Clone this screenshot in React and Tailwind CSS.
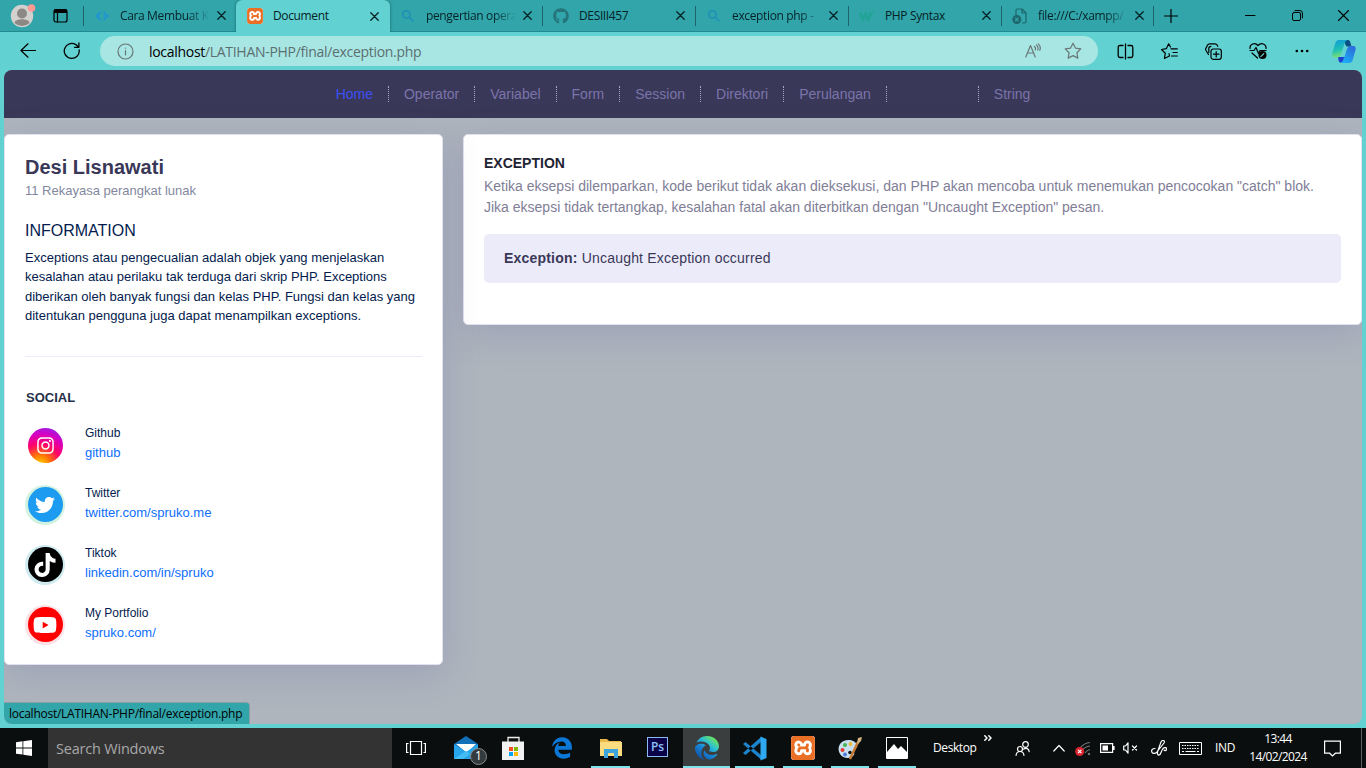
import { FaTwitter, FaTiktok, FaInstagram, FaYoutube, FaGithub } from "react-icons/fa";
import { FaEdge, FaEdgeLegacy } from "react-icons/fa6";
import { SiXampp } from "react-icons/si";

const line = { fill: "none", stroke: "currentColor", strokeWidth: 1.2, strokeLinecap: "round", strokeLinejoin: "round" };

function Svg({ w = 16, h, vb, className = "", children, ...rest }) {
  return (
    <svg width={w} height={h || w} viewBox={vb || `0 0 ${w} ${h || w}`} className={"shrink-0 " + className} {...rest}>
      {children}
    </svg>
  );
}

const Close = () => (
  <Svg w={9} {...line} strokeWidth={1.3} className="text-[#062124]">
    <path d="M.8.8l7.4 7.4M8.2.8L.8 8.2" />
  </Svg>
);

function Xampp({ size = 16 }) {
  return (
    <span className="flex shrink-0 overflow-hidden rounded-[3px] bg-white">
      <SiXampp size={size} color="#e96f26" />
    </span>
  );
}

const SearchFav = () => (
  <Svg w={16} fill="none" stroke="#2292b5" strokeWidth="1.800">
    <circle cx="6.500" cy="6.500" r="3.700" />
    <path d="M9.300 9.300l4 4" />
  </Svg>
);

const tabs = [
  { title: "Cara Membuat K", fade: true, icon: <Svg w={16}><path d="M6.500 3L1 8l5.500 5V9.700L4.700 8l1.800-1.700zM9.500 3L15 8l-5.500 5V9.700L11.300 8 9.500 6.300z" fill="#2196cf" /></Svg> },
  { title: "Document", active: true, icon: <Xampp /> },
  { title: "pengertian opera", fade: true, icon: <SearchFav /> },
  { title: "DESIII457", icon: <FaGithub size={16} color="#24747a" /> },
  { title: "exception php -", fade: true, icon: <SearchFav /> },
  { title: "PHP Syntax", icon: <Svg w={16}><path d="M.8 4.500l3 6.500 2.700-5 2.700 5 3-6.500" fill="none" stroke="#22a596" strokeWidth="2.800" /><path d="M12.800 3h2.200l-1 1.500c1.500 0 1.300 2-.3 2" fill="none" stroke="#22a596" strokeWidth=".8" /></Svg> },
  { title: "file:///C:/xampp/", fade: true, last: true, icon: <Svg w={16} {...line} className="text-[#1d686d]"><path d="M4 6.500V2.500Q4 1 5.500 1H10l4 4v8.500Q14 15 12.500 15H10.500M10 1v4h4" /><circle cx="4.800" cy="11.500" r="3.900" fill="currentColor" /><path d="M3.500 10.200l2.600 2.600M6.100 10.200l-2.600 2.600" stroke="#31a6aa" /></Svg> },
];

function TabStrip() {
  return (
    <div className="flex h-8 shrink-0 border-b border-[#238b8f] bg-[#31a5aa] text-[#052226]">
      <div className="flex w-[83px] items-center pl-[10px]">
        <Svg w={26}>
          <circle cx="12" cy="13" r="11.200" fill="#d3d1cf" />
          <circle cx="12" cy="10.500" r="5" fill="#8b8886" />
          <path d="M4.500 20c0-5 15-5 15 0a11 11 0 0 1-15 0z" fill="#8b8886" />
          <circle cx="21.500" cy="5" r="3.800" fill="#ff9a95" />
        </Svg>
        <Svg w={15} h={15} className="ml-[17px] text-black"><rect x="1" y="1.500" width="13" height="12.500" rx="2" {...line} /><path d="M1 1.500h13V5H1z" fill="currentColor" /><path d="M4.500 5v9" {...line} /></Svg>
      </div>
      {tabs.map((t, i) => (
        <div
          key={t.title}
          className={
            t.active
              ? "-mb-px -mr-px flex h-8 w-[154px] items-center rounded-t-[6px] bg-[#62d1d1] pl-[11px] shadow-[0_0_3px_rgba(0,60,60,.6)] [clip-path:inset(-3px_-3px_0_-3px)]"
              : "flex items-center " + (t.last ? "w-[152px]" : "w-[153px]")
          }
        >
          {!t.active && <span className={"mr-[10px] h-5 w-px " + (i === 2 ? "bg-transparent" : "bg-[#1b6468]")} />}
          {t.icon}
          <span
            className={
              "ml-[10px] h-5 w-[90px] shrink-0 overflow-hidden whitespace-nowrap text-[12px] leading-5 tracking-[-0.36px] " +
              (t.fade ? "[mask-image:linear-gradient(90deg,#000_75%,transparent)]" : "")
            }
          >
            {t.title}
          </span>
          <span className="ml-[7px]"><Close /></span>
        </div>
      ))}
      <div className="flex flex-1 items-center text-black">
        <span className="h-5 w-px bg-[#1b6468]" />
        <Svg w={14} {...line} className="ml-[10px]"><path d="M7 .5v13M.5 7h13" /></Svg>
        <Svg w={11} {...line} strokeWidth={1} className="ml-[67px]"><path d="M.5 5.500h9.500" /></Svg>
        <Svg w={11} {...line} strokeWidth={1} className="ml-[36px]"><rect x=".5" y="2.500" width="8" height="8" rx="1.500" /><path d="M3 .6h5Q10.400.6 10.400 3v5" /></Svg>
        <Svg w={11} {...line} strokeWidth={1.100} className="ml-[35px]"><path d="M.5.5l10 10M10.500.5l-10 10" /></Svg>
      </div>
    </div>
  );
}

function Toolbar() {
  return (
    <div className="flex h-[38px] shrink-0 items-center text-black">
      <Svg w={17} {...line} className="ml-[20px]"><path d="M15.500 7.500H1M8 .8L1 7.500l7 6.700" /></Svg>
      <Svg w={18} {...line} strokeWidth={1.300} className="ml-[26px]"><path d="M16.200 8A7.500 7.500 0 1 1 12.800 2.600L15.500 5M15.900 1v4.300h-4.300" /></Svg>
      <div className="ml-[19px] flex h-[30px] w-[998px] items-center rounded-full bg-[#a8e6e4] text-[#697777]">
        <Svg w={17} {...line} className="ml-[17px]"><circle cx="8.500" cy="8.500" r="7.500" /><path d="M8.500 7.500v4.500M8.500 5v.2" /></Svg>
        <span className="ml-[15px] flex-1 text-[14px] tracking-[-0.3px] text-[#5c6f6f]">
          <span className="text-black">localhost</span>/LATIHAN-PHP/final/exception.php
        </span>
        <Svg w={16} {...line} className="mr-[23px]"><path d="M.8 14L5.500 2.500 10.200 14M2.500 10h6M9.500 3.500q1.500 1.500.8 3.500M11.500 2q2.300 2 1.200 5M13.300.8q3 3 1.500 6.500" /></Svg>
        <Svg w={18} {...line} className="mr-[16px]"><path d="M9 1.200l2.400 4.900 5.400.8-3.900 3.800.9 5.400L9 13.600l-4.800 2.500.9-5.400L1.200 6.900l5.400-.8z" /></Svg>
      </div>
      <Svg w={17} {...line} strokeWidth={1.300} className="ml-[19px]"><path d="M6 2.500H3Q1.200 2.500 1.200 4.300v8.400Q1.200 14.500 3 14.500h3M11 2.500h3q1.800 0 1.800 1.800v8.400q0 1.800-1.800 1.800h-3M8.500 1v15" /></Svg>
      <Svg w={17} {...line} className="ml-[27px]"><path d="M10 5.800h6.300M12 9.500h4.300M10.500 13h5.800M9.500 4L7.700.8 5.300 5.700.5 6.500l3.800 3.700-.9 5.300L8.500 13l-.5-2.500" /></Svg>
      <Svg w={17} {...line} className="ml-[27px]"><rect x="6" y="6" width="10.300" height="10.300" rx="2.200" /><path d="M11.200 8.500v5.400M8.500 11.200h5.400M3.500 11.500L1 7.500Q0 5.500 1.500 4.500L2.200 2.500Q3 .8 5 .8h5q2 0 2.800 2.500M3.800 9.500V5.500Q3.800 3.300 6 3.300" /></Svg>
      <Svg w={18} {...line} className="ml-[27px]"><path d="M1 6.500C.5 2 6 0 9 3.500 12 0 17.500 2 17 6.500M1 8.500h4l2-3 2.500 6 1.500-3h6M3 11l5.500 5" /><circle cx="13.500" cy="13" r="4" fill="currentColor" stroke="none" /><path d="M11.800 14.700l3-3" stroke="#62d1d1" /></Svg>
      <Svg w={14} h={4} className="ml-[28px]" fill="currentColor"><circle cx="1.800" cy="2" r="1.300" /><circle cx="7" cy="2" r="1.300" /><circle cx="12.200" cy="2" r="1.300" /></Svg>
      <Svg w={24} h={23} className="ml-[23px]">
        <defs>
          <linearGradient id="cp1" x1="0" y1="0" x2=".2" y2="1"><stop stopColor="#0e9cd9" /><stop offset=".6" stopColor="#20c0b4" /><stop offset="1" stopColor="#75de78" /></linearGradient>
          <linearGradient id="cp2" x1="0" y1="1" x2=".6" y2="0"><stop stopColor="#18b6fa" /><stop offset="1" stopColor="#2b6fdc" /></linearGradient>
        </defs>
        <path d="M11 0h5q2 0 2.500 3l1 3.500h-5z" fill="#0b4f83" />
        <path d="M6 17h7l-2 4.500Q10 23 8 22.500 6.500 22 6 17z" fill="#2043cf" />
        <path d="M7 0h8q-2 1-3 5L9 14q-1 3.500-4 3.500H2Q-.5 17 .3 13L3 4Q4 0 7 0z" fill="url(#cp1)" />
        <path d="M17 23H9q2-1 3-5l3-9q1-3 4-3h3q2.300.5 1.500 4L21 19q-1 4-4 4z" fill="url(#cp2)" />
      </Svg>
    </div>
  );
}

const nav = ["Home", "Operator", "Variabel", "Form", "Session", "Direktori", "Perulangan", "", "String"];

const socials = [
  { name: "Github", link: "github", ring: "mt-[3px] bg-white", disc: "bg-[radial-gradient(circle_at_35%_105%,#ffd600_0%,#ff7a00_22%,#ff0169_48%,#d300c5_72%,#7638fa_100%)]", icon: <FaInstagram size={19} /> },
  { name: "Twitter", link: "twitter.com/spruko.me", ring: "mt-[2px] bg-[#d2f2e0]", disc: "bg-[#1d9bf0]", icon: <FaTwitter size={20} /> },
  { name: "Tiktok", link: "linkedin.com/in/spruko", ring: "mt-[2px] bg-[#cfebf0]", disc: "bg-black", icon: <FaTiktok size={24} /> },
  { name: "My Portfolio", link: "spruko.com/", ring: "mt-[2px] bg-[#fce0e4]", disc: "bg-[#ff0000]", icon: <FaYoutube size={24} /> },
];

const card = "rounded-[5px] border border-[#e1e1f0] bg-white shadow-[0_8px_36px_0_rgba(90,90,160,.22)]";

function Page() {
  return (
    <main className="mx-1 flex h-[654px] shrink-0 flex-col overflow-hidden rounded-[8px] bg-[#aeb5bd] font-['Liberation_Sans',sans-serif]">
      <nav className="flex h-12 shrink-0 items-center justify-center bg-[#3a3858] text-[14px] text-[#7b74ab]">
        {nav.map((n, i) => (
          <span
            key={i}
            className={
              "flex h-4 items-center px-[15px] leading-4 " +
              (i < 8 ? "border-r border-dotted border-[#a7a4c4] " : "") +
              (i === 0 ? "text-[#3d50f5] " : "") +
              (n ? "" : "w-[92px]")
            }
          >
            {n}
          </span>
        ))}
      </nav>
      <div className="isolate mt-4 flex items-start gap-5">
        <section className={card + " relative z-10 h-[531px] w-[439px] shrink-0 px-5 pt-5 text-[13px] text-[#031b4e]"}>
          <h1 className="text-[20px] font-bold leading-6 text-[#3a3858]">Desi Lisnawati</h1>
          <p className="mt-px leading-[22px] text-[#8288a0]">11 Rekayasa perangkat lunak</p>
          <h2 className="mt-[19px] text-[16px] leading-5">INFORMATION</h2>
          <p className="mt-[6.600px] leading-[19.500px]">
            Exceptions atau pengecualian adalah objek yang menjelaskan<br />
            kesalahan atau perilaku tak terduga dari skrip PHP. Exceptions<br />
            diberikan oleh banyak fungsi dan kelas PHP. Fungsi dan kelas yang<br />
            ditentukan pengguna juga dapat menampilkan exceptions.
          </p>
          <hr className="mt-[30.400px] border-[#eaedf7]" />
          <h3 className="ml-px mt-[31px] text-[13px] font-bold leading-5 text-[#242f48]">SOCIAL</h3>
          <ul className="mt-[15px]">
            {socials.map((s) => (
              <li key={s.name} className="mb-5 flex h-10 gap-5">
                <span className={"flex size-10 items-center justify-center rounded-full " + s.ring}>
                  <span className={"flex size-[35px] items-center justify-center rounded-full text-white " + s.disc}>{s.icon}</span>
                </span>
                <span className="flex flex-col leading-5">
                  <span className="text-[12px]">{s.name}</span>
                  <a className="text-[#0d6efd]">{s.link}</a>
                </span>
              </li>
            ))}
          </ul>
        </section>
        <section className={card + " h-[191px] flex-1 px-5 pt-[18px] text-[14px]"}>
          <h2 className="font-bold leading-5 text-[#1f2433]">EXCEPTION</h2>
          <p className="mt-[3px] whitespace-nowrap leading-[21px] text-[#7f7e97]">
            Ketika eksepsi dilemparkan, kode berikut tidak akan dieksekusi, dan PHP akan mencoba untuk menemukan pencocokan "catch" blok.<br />
            Jika eksepsi tidak tertangkap, kesalahan fatal akan diterbitkan dengan "Uncaught Exception" pesan.
          </p>
          <div className="mt-4 flex h-[49px] items-center rounded-[5px] bg-[#ecebfa] px-5 tracking-[0.2px] text-[#3a3858]">
            <strong>Exception:</strong>&nbsp;<span>Uncaught Exception occurred</span>
          </div>
        </section>
        {/* keeps the wide card's shadow clear of the profile card */}
      </div>
      <div className="z-20 mt-auto flex h-[22px] w-[246px] shrink-0 items-center rounded-tr-[4px] border-r border-t border-[#8aa0a8] bg-[#31a5aa] pl-[5px] font-['Open_Sans','Noto_Sans',sans-serif] text-[12px] tracking-[-0.260px] text-black">
        localhost/LATIHAN-PHP/final/exception.php
      </div>
    </main>
  );
}

function Mail() {
  return (
    <span className="relative flex">
      <Svg w={34} h={28}>
        <path d="M1 8L13 0l12 8v15H1z" fill="#1170b8" />
        <path d="M3 8h20l-9 9z" fill="#fff" />
        <path d="M1 8l12 8 12-8v15H1z" fill="#27a5ea" />
        <path d="M1 23l12-8 4 3-7 5z" fill="#44bdf5" />
      </Svg>
      <span className="absolute left-[17px] top-[12px] flex size-[17px] items-center justify-center rounded-full border border-[#8b8b8b] bg-[#343b3e] text-[12px] text-white">1</span>
    </span>
  );
}

const apps = [
  { icon: <Mail />, w: "w-[34px] ml-[27px] pt-[3px]" },
  { icon: <Svg w={24}><path d="M7 6V1.500h11V6" fill="none" stroke="#eee" strokeWidth="1.300" /><path d="M1 5.500h22V24H1z" fill="#f2f2f2" /><path d="M8 11h4v4H8z" fill="#f25022" /><path d="M13 11h4v4h-4z" fill="#7fba00" /><path d="M8 16h4v4H8z" fill="#00a4ef" /><path d="M13 16h4v4h-4z" fill="#ffb900" /></Svg>, w: "w-[39px] ml-[6px]" },
  { icon: <FaEdgeLegacy size={22} color="#0b78d8" />, w: "w-[39px] ml-[10px]" },
  { icon: <Svg w={22} h={20}><path d="M0 1h7l2 2h12v14H0z" fill="#e9b84b" /><path d="M0 4h22v14H0z" fill="#fbdc80" /><path d="M4 20v-9h14v9h-4v-5H8v5z" fill="#3da5de" /></Svg>, w: "w-[39px] ml-[10px]", open: true },
  { icon: <span className="mb-0.5 flex h-5 w-[21px] items-center justify-center border border-[#8db9f5] bg-[#0a0347] text-[12px] font-semibold text-[#8fc3fb]">Ps</span>, w: "w-[37px] ml-[9px]" },
  {
    icon: (
      <>
        <Svg w={0} h={0} vb="0 0 1 1">
          <defs>
            <linearGradient id="edgeSwirl" x1=".9" y1=".15" x2=".3" y2=".95">
              <stop stopColor="#6fe35d" />
              <stop offset=".35" stopColor="#2cbfd3" />
              <stop offset=".65" stopColor="#1583d8" />
              <stop offset="1" stopColor="#1558a8" />
            </linearGradient>
          </defs>
        </Svg>
        <FaEdge size={24} className="[&_path]:fill-[url(#edgeSwirl)]" />
      </>
    ),
    w: "w-[47px] ml-[7px] bg-[#3b3e3e]", open: true,
  },
  { icon: <Svg w={25}><path d="M1 8l2.500-2L19 19v4.500zM1 17l2.500 2L19 6V1z" fill="#1c84cc" /><path d="M18.500.5L24.500 3v19l-6 2.500z" fill="#2fa8f2" /></Svg>, w: "w-[39px] ml-[5px]", open: true },
  { icon: <Xampp size={24} />, w: "w-[39px] ml-[9px]", open: true },
  { icon: <Svg w={26} h={24}><path d="M3 8C7 2 18 3 20 9c1 3-2 3-3 5s1 3 0 5c-3 4-11 4-14-1-2-3-2-7 0-10z" fill="#c8dff0" /><circle cx="5.500" cy="14" r="2" fill="#e23c33" /><circle cx="8" cy="9" r="2" fill="#45b34c" /><circle cx="13.500" cy="8" r="1.900" fill="#f2b632" /><circle cx="8" cy="18.500" r="1.900" fill="#5076d6" /><circle cx="13" cy="16.500" r="1.800" fill="#111" /><path d="M13 23l8-17" stroke="#c77a33" strokeWidth="2.500" /><path d="M20 7l1-5 4-1-1 4-3 3z" fill="#d6b680" /></Svg>, w: "w-[38px] ml-[9px]", open: true },
  { icon: <Svg w={22}><path d="M.5.5h21v21H.5z" fill="#0b0e0e" stroke="#fff" /><path d="M1 15l7-8 4 5 3-3 6 6v7H1z" fill="#fff" /></Svg>, w: "w-[38px] ml-[9px]", open: true },
];

function Taskbar() {
  return (
    <footer className="mt-1 flex h-10 shrink-0 items-center bg-[#0b0e0e] text-[12px] text-white">
      <div className="flex w-12 justify-center">
        <Svg w={16} fill="#fff"><path d="M0 2.200L6.500 1.300v6.200H0zM7.300 1.200L16 0v7.500H7.300zM0 8.400h6.500v6.200L0 13.700zM7.300 8.400H16V16l-8.700-1.200z" /></Svg>
      </div>
      <div className="flex h-10 w-[344px] items-center bg-[#333333] pl-2 pt-0.5 text-[14.500px] tracking-[-0.2px] text-[#a8a8a8]">Search Windows</div>
      <Svg w={20} h={16} fill="none" stroke="#fff" strokeWidth="1.200" className="ml-[14px]"><path d="M4.500 1.500h11v13h-11zM2.500 3.500H.6v9h1.900M17.500 3.500h1.900v9h-1.900" /></Svg>
      {apps.map((a, i) => (
        <div key={i} className={"flex h-10 shrink-0 items-center justify-center " + a.w + (a.open ? " border-b-2 border-[#80e2ea] pt-[2px]" : "")}>
          {a.icon}
        </div>
      ))}
      <span className="ml-[17px] w-[45px] tracking-[-0.4px]">Desktop</span>
      <Svg w={8} h={6} {...line} strokeWidth={1.500} className="mb-5 ml-[6px]"><path d="M.8.8L3 3 .8 5.200M4.800.8L7 3 4.800 5.200" /></Svg>
      <Svg w={15} {...line} className="ml-[23px]"><circle cx="10.500" cy="3.500" r="2.800" /><path d="M8 8.200q5.500-2.500 6.200 2.500" /><circle cx="5" cy="8" r="2.500" /><path d="M1 14.300q.5-3.800 4-3.800t4 3.800" /></Svg>
      <Svg w={12} h={8} {...line} className="ml-[23px]"><path d="M.8 7L6 1.500 11.200 7" /></Svg>
      <Svg w={16} className="ml-[10px]"><path d="M5 8q4-5 10-5.500M7 10.500q3-4 8-4.500M10 13q2-3 5-3.500" fill="none" stroke="#777" strokeWidth="1.200" /><circle cx="14" cy="14" r="1.200" fill="#777" /><circle cx="4.700" cy="11.500" r="4.500" fill="#dc2430" /><path d="M3 9.800l3.400 3.400M6.400 9.800L3 13.200" stroke="#fff" strokeWidth="1.200" /></Svg>
      <Svg w={15} h={10} className="ml-[9px]"><path d="M.6.6h12v8.800H.6z" fill="none" stroke="#fff" strokeWidth="1.200" /><path d="M13 3h1.600v4H13zM2.500 2.500h5.500v5H2.500z" fill="#fff" /></Svg>
      <Svg w={15} h={12} {...line} className="ml-[8px]"><path d="M.7 4h1.800L5 .8v10.400L2.500 8H.7zM9.500 4l4 4M13.500 4l-4 4" /></Svg>
      <Svg w={16} {...line} className="ml-[13px]"><path d="M4 8.500C1 8.500.3 10.500.8 12s3.200 2 4.700.5L13 3q1-2-.5-2.500T10 2L6.800 11c-.8 3 0 4.500 1.400 4 2-.7 1.800-4 3.800-6.500 1.500-1.500 4-1 3.500 1-.5 1.500-2 1.500-2.500.5" /></Svg>
      <Svg w={23} h={13} className="ml-[12px]"><path d="M.5.5h22v12H.5z" fill="none" stroke="#fff" /><path d="M3 3.500h17M3 6.500h17" stroke="#fff" strokeDasharray="1.500 1" /><path d="M3 9.500h2M6.500 9.500h10M18 9.500h2" stroke="#fff" /></Svg>
      <span className="ml-[13px] w-[20px] tracking-[-0.300px]">IND</span>
      <div className="ml-[14px] w-[58px] whitespace-nowrap text-center leading-[18px] tracking-[-0.6px]">
        <div>13:44</div>
        <div>14/02/2024</div>
      </div>
      <Svg w={17} {...line} strokeLinejoin="miter" className="ml-[17px]"><path d="M.6 1.200h15.800v12h-5L8.500 16l-2.900-2.800h-5z" /></Svg>
      <span className="ml-auto mr-1 h-10 w-px bg-[#5d5f5f]" />
    </footer>
  );
}

export default function App() {
  return (
    <div className="flex h-[768px] w-[1366px] flex-col overflow-hidden bg-[#62d1d1] font-['Open_Sans','Noto_Sans',sans-serif]">
      <TabStrip />
      <Toolbar />
      <Page />
      <Taskbar />
    </div>
  );
}
